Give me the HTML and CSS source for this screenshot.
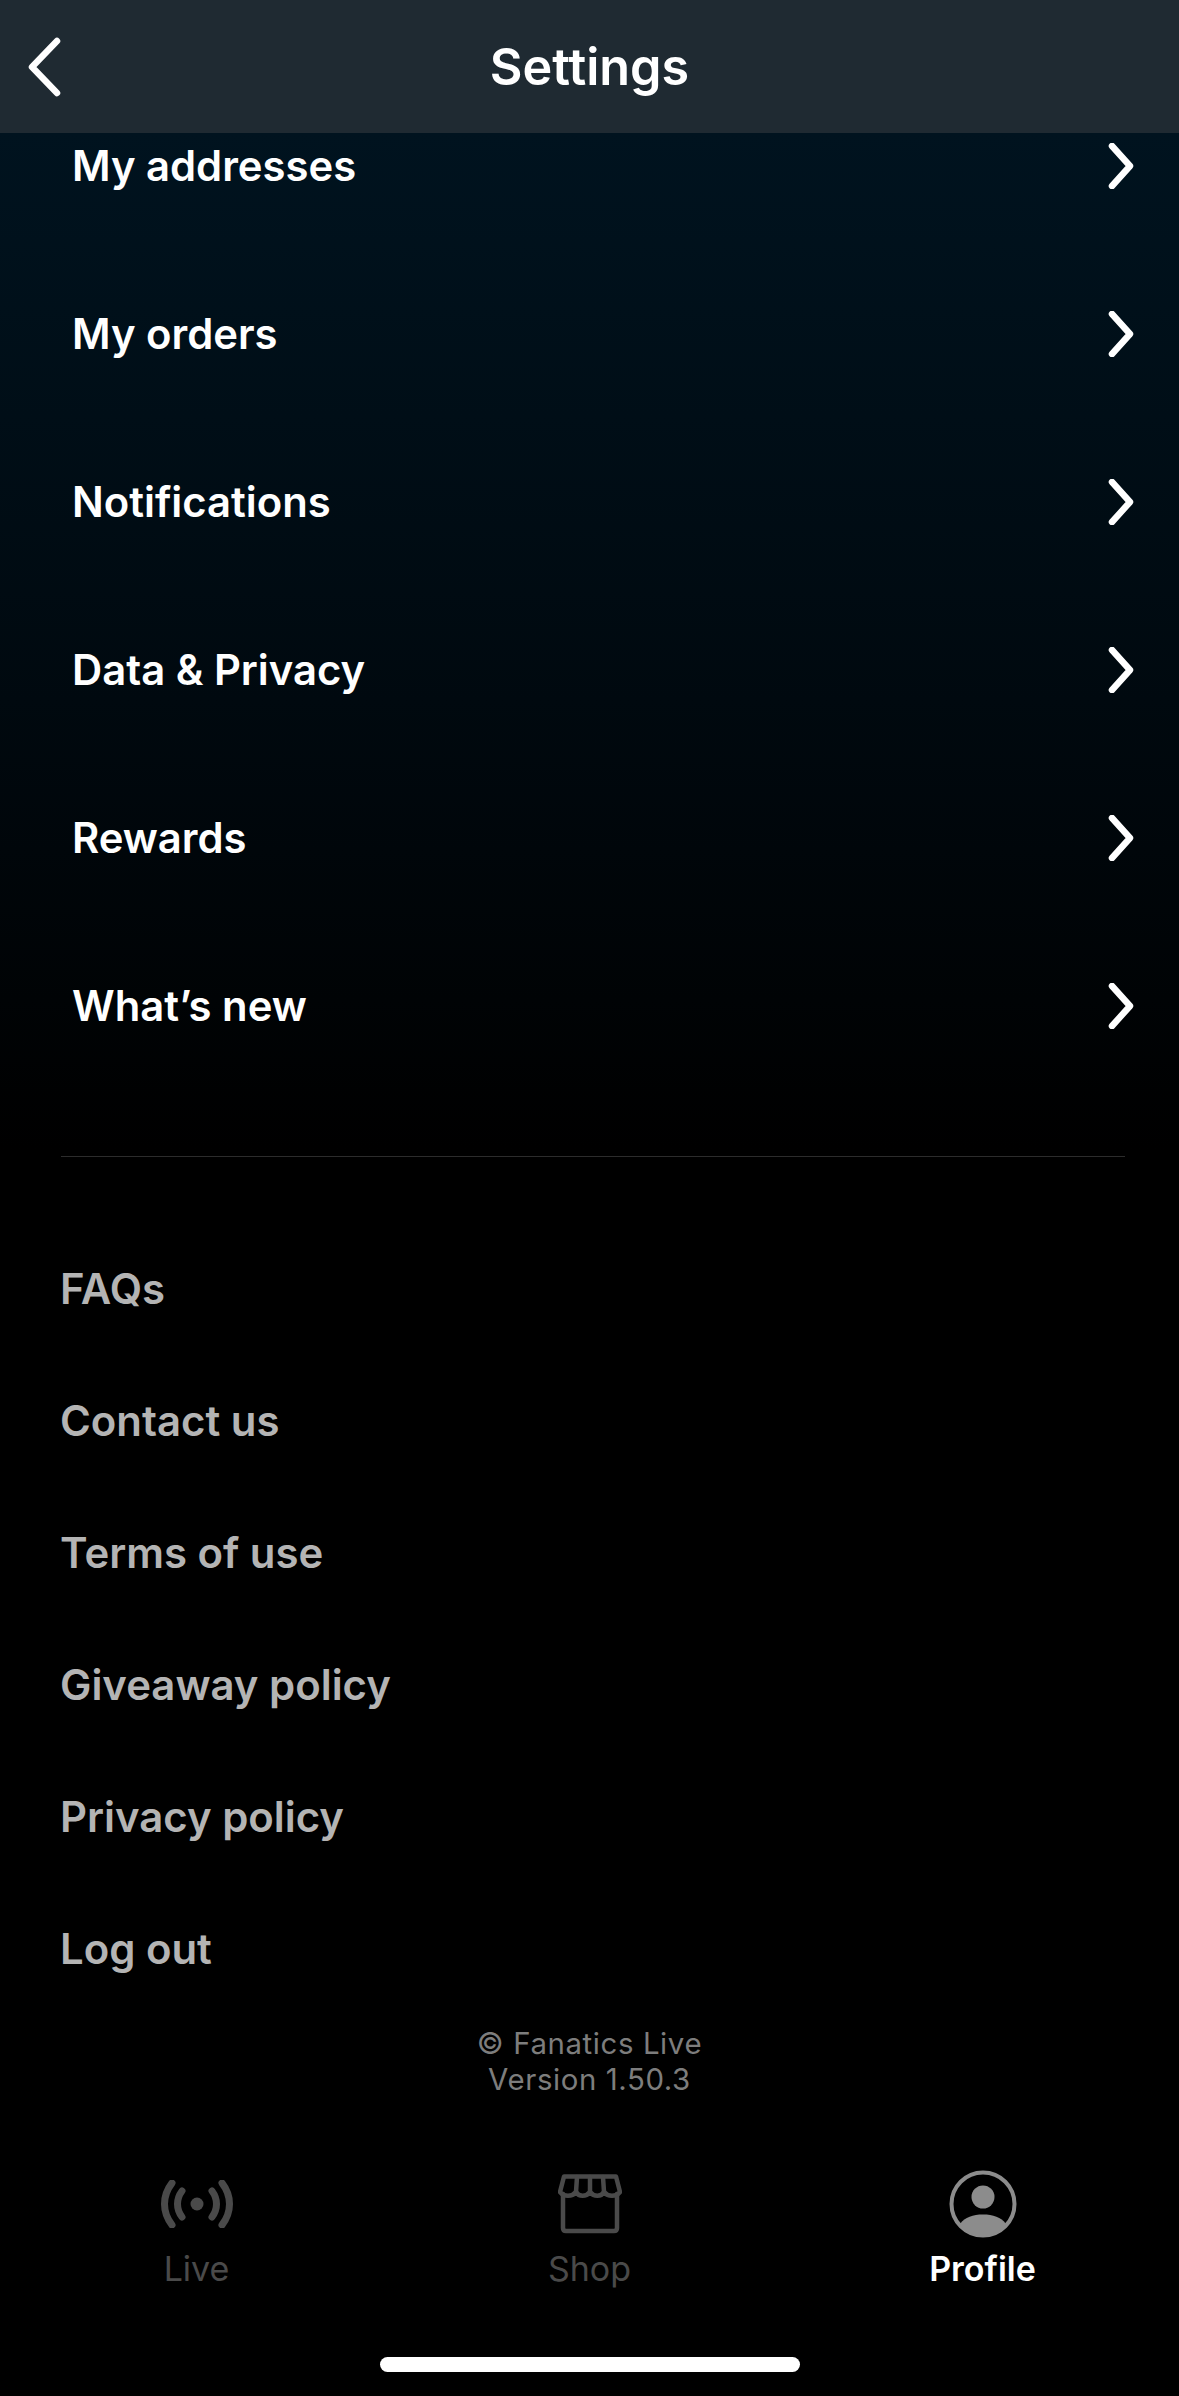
FILE: index.html
```html
<!DOCTYPE html>
<html lang="en">
<head>
<meta charset="utf-8">
<title>Settings</title>
<link rel="stylesheet" href="styles.css">
</head>
<body>
<div class="screen">
  <header class="header">
    <svg class="back" viewBox="0 0 36 60" width="36" height="60"><path d="M31 4 L6 30 L31 56" /></svg>
    <h1 class="title">Settings</h1>
  </header>
  <main class="main">
    <ul class="rows">
      <li class="row"><span>My addresses</span><svg class="chev" viewBox="0 0 26 46" width="26" height="46"><path d="M4 3 L22 23 L4 43"/></svg></li>
      <li class="row"><span>My orders</span><svg class="chev" viewBox="0 0 26 46" width="26" height="46"><path d="M4 3 L22 23 L4 43"/></svg></li>
      <li class="row"><span>Notifications</span><svg class="chev" viewBox="0 0 26 46" width="26" height="46"><path d="M4 3 L22 23 L4 43"/></svg></li>
      <li class="row"><span>Data &amp; Privacy</span><svg class="chev" viewBox="0 0 26 46" width="26" height="46"><path d="M4 3 L22 23 L4 43"/></svg></li>
      <li class="row"><span>Rewards</span><svg class="chev" viewBox="0 0 26 46" width="26" height="46"><path d="M4 3 L22 23 L4 43"/></svg></li>
      <li class="row"><span>What’s new</span><svg class="chev" viewBox="0 0 26 46" width="26" height="46"><path d="M4 3 L22 23 L4 43"/></svg></li>
    </ul>
    <hr class="divider">
    <ul class="links">
      <li class="link">FAQs</li>
      <li class="link">Contact us</li>
      <li class="link">Terms of use</li>
      <li class="link">Giveaway policy</li>
      <li class="link">Privacy policy</li>
      <li class="link">Log out</li>
    </ul>
    <p class="legal">© Fanatics Live<br>Version 1.50.3</p>
  </main>
  <nav class="tabs">
    <div class="tab">
      <div class="tab-icon">
        <svg viewBox="0 0 72 48" width="72" height="48" class="ic-dim">
          <circle cx="36" cy="24" r="6.5" class="fill"/>
          <path d="M11 3 C1 16 1 32 11 45 M61 3 C71 16 71 32 61 45 M21 11 C15 19 15 29 21 37 M51 11 C57 19 57 29 51 37"/>
        </svg>
      </div>
      <span class="tab-label">Live</span>
    </div>
    <div class="tab">
      <div class="tab-icon">
        <svg viewBox="0 0 64 60" width="64" height="60" class="ic-dim thin">
          <path d="M5 20 V54 Q5 57 8 57 H56 Q59 57 59 54 V20"/>
          <path d="M6 2.5 H58 L62 18 C58 23 50 23 46 18 C43 23 36 23 32 18 C28 23 21 23 18 18 C14 23 6 23 2 18 Z"/>
          <path d="M19 3 L18 18 M32 3 V18 M45 3 L46 18"/>
        </svg>
      </div>
      <span class="tab-label">Shop</span>
    </div>
    <div class="tab active">
      <div class="tab-icon">
        <svg viewBox="0 0 68 68" width="68" height="68" class="ic-prof">
          <circle cx="34" cy="34" r="31.5" class="ring"/>
          <circle cx="34" cy="27" r="11.5" class="fill"/>
          <path class="fill" d="M11 54 C16 47 24 44.5 34 44.5 C44 44.5 52 47 57 54 C51 62 43 66 34 66 C25 66 17 62 11 54 Z"/>
        </svg>
      </div>
      <span class="tab-label">Profile</span>
    </div>
  </nav>
  <div class="home-wrap"><div class="home-bar"></div></div>
</div>
</body>
</html>
```

FILE: styles.css
```css
* { box-sizing: border-box; }
html, body { margin: 0; padding: 0; background: #000; }
body { font-family: Inter, "Liberation Sans", sans-serif; color: #fff; }
.screen {
  width: 1179px;
  height: 2396px;
  display: flex;
  flex-direction: column;
  overflow: hidden;
  background: linear-gradient(180deg, #00131f 133px, #00090f 700px, #000 1150px);
}
.header {
  position: relative;
  height: 133px;
  flex: none;
  display: flex;
  align-items: center;
  justify-content: center;
  background: #1f2a32;
}
.back { position: absolute; left: 26px; top: 37px; }
.back path, .chev path { fill: none; stroke: #fff; stroke-width: 6.5; stroke-linecap: round; stroke-linejoin: round; }
.title { margin: 0; font-size: 50.3px; font-weight: 600; line-height: 60px; }
.main { flex: 1; display: flex; flex-direction: column; }
.rows { list-style: none; margin: 0; padding: 0 45px 0 72px; display: flex; flex-direction: column; gap: 102px; }
.row { height: 66px; display: flex; align-items: center; justify-content: space-between; font-size: 41.8px; font-weight: 600; }
.divider { margin: 117px 54px 0 61px; border: 0; height: 1px; background: #2c2c2c; flex: none; }
.links { list-style: none; margin: 102px 0 0; padding: 0 0 0 60px; display: flex; flex-direction: column; gap: 72px; }
.link { height: 60px; line-height: 60px; font-size: 41.9px; font-weight: 600; color: #b4b4b4; }
.legal { margin: 47px 0 0; text-align: center; font-size: 29.4px; line-height: 36px; color: #7d7d7d; letter-spacing: 0.6px; }
.tabs { flex: none; height: 189px; display: grid; grid-template-columns: repeat(3, 393px); }
.tab { display: flex; flex-direction: column; align-items: center; }
.tab-icon { height: 72px; display: flex; align-items: center; justify-content: center; }
.tab-label { margin-top: 9px; font-size: 34px; line-height: 40px; color: #4a4a4a; }
.active .tab-label { color: #fff; font-weight: 600; }
.ic-dim path { fill: none; stroke: #4a4a4a; stroke-width: 7; stroke-linecap: round; stroke-linejoin: round; }
.ic-dim.thin path { stroke-width: 4.5; }
.ic-dim .fill { fill: #4a4a4a; }
.ic-prof .ring { fill: none; stroke: #8c8c8c; stroke-width: 4; }
.ic-prof .fill { fill: #8c8c8c; }
.home-wrap { flex: none; height: 15px; margin-bottom: 24px; display: flex; justify-content: center; }
.home-bar { width: 420px; height: 15px; border-radius: 8px; background: #fff; }
```
